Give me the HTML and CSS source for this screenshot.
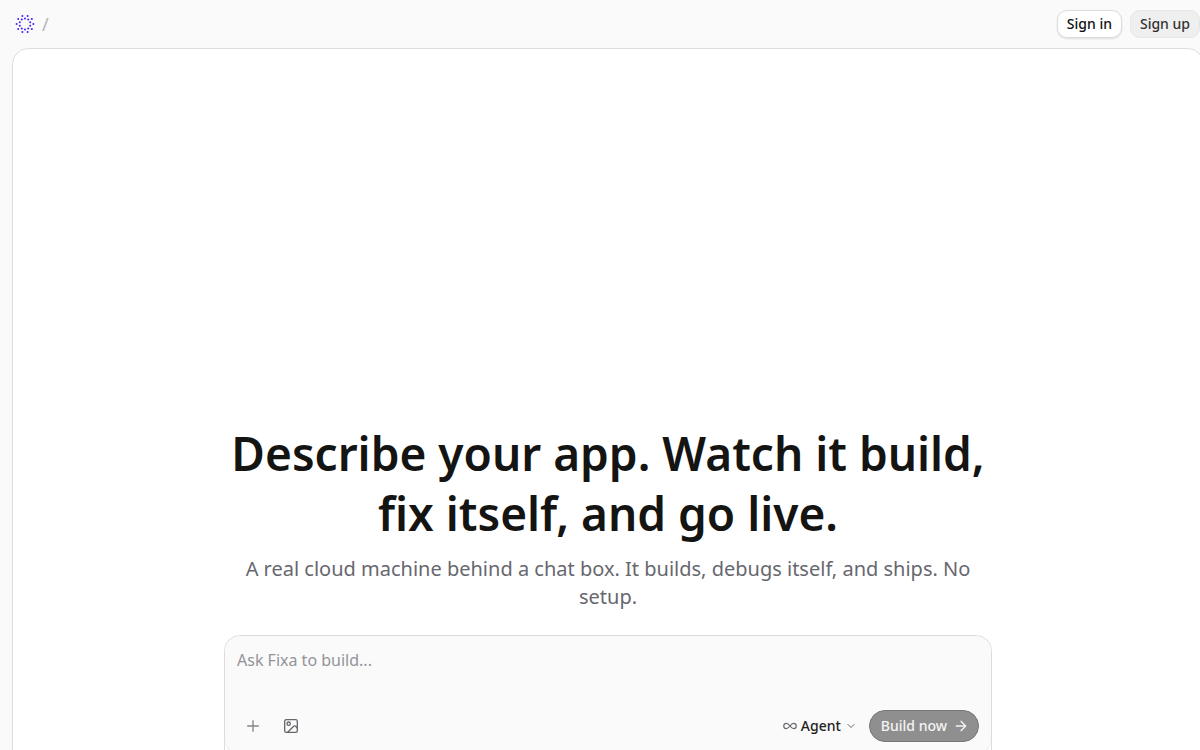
FILE: index.html
```html
<!DOCTYPE html>
<html lang="en">
<head>
  <meta charset="UTF-8">
  <meta name="viewport" content="width=device-width, initial-scale=1.0">
  <title>Fixa</title>
  <link rel="stylesheet" href="styles.css">
</head>
<body>
  <header class="topbar">
    <nav class="brand">
      <a class="logo" href="/" aria-label="Fixa home">
        <svg width="20" height="20" viewBox="-10 -10 20 20" fill="#4320f0">
          <circle cx="2.6" cy="-8" r="1"/><circle cx="6.8" cy="-4.9" r="1"/>
          <circle cx="8.4" cy="0" r="1"/><circle cx="6.8" cy="4.9" r="1"/>
          <circle cx="2.6" cy="8" r="1"/><circle cx="-2.6" cy="8" r="1"/>
          <circle cx="-6.8" cy="4.9" r="1"/><circle cx="-8.4" cy="0" r="1"/>
          <circle cx="-6.8" cy="-4.9" r="1"/><circle cx="-2.6" cy="-8" r="1"/>
          <circle cx="0" cy="-5.4" r="1"/><circle cx="3.2" cy="-4.4" r="1"/>
          <circle cx="5.2" cy="-1.7" r="1"/><circle cx="5.2" cy="1.7" r="1"/>
          <circle cx="3.2" cy="4.4" r="1"/><circle cx="0" cy="5.4" r="1"/>
          <circle cx="-3.2" cy="4.4" r="1"/><circle cx="-5.2" cy="1.7" r="1"/>
          <circle cx="-5.2" cy="-1.7" r="1"/><circle cx="-3.2" cy="-4.4" r="1"/>
        </svg>
      </a>
      <span class="slash">/</span>
    </nav>
    <div class="auth">
      <button class="btn btn-light" type="button">Sign in</button>
      <button class="btn btn-muted" type="button">Sign up</button>
    </div>
  </header>

  <main class="panel">
    <section class="hero">
      <h1>Describe your app. Watch it build, fix itself, and go live.</h1>
      <p class="subtitle">A real cloud machine behind a chat box. It builds, debugs itself, and ships. No setup.</p>

      <div class="composer-shell">
        <form class="composer">
          <textarea class="prompt" rows="2" aria-label="Prompt" placeholder="Ask Fixa to build..."></textarea>
          <div class="toolbar">
            <div class="tools">
              <button class="icon-btn add-btn" type="button" aria-label="Add">
                <svg width="16" height="16" viewBox="0 0 24 24"><path d="M4 12h16M12 4v16"/></svg>
              </button>
              <button class="icon-btn" type="button" aria-label="Attach image">
                <svg width="16" height="16" viewBox="0 0 24 24"><rect x="2.5" y="2.5" width="19" height="19" rx="2.5"/><circle cx="8.5" cy="8.5" r="2.5"/><path d="M7 21.5 16 12.5c1-1 2-1 3 0l2.500 2.500"/></svg>
              </button>
            </div>
            <div class="actions">
              <button class="mode-btn" type="button">
                <svg width="14" height="14" viewBox="0 0 24 24"><path d="M12 12c-2-2.7-4-4.500-6.200-4.500a4.500 4.500 0 0 0 0 9C8 16.500 10 14.700 12 12c2-2.700 4-4.500 6.200-4.500a4.500 4.500 0 0 1 0 9C16 16.500 14 14.700 12 12z"/></svg>
                <span>Agent</span>
                <svg width="12" height="12" viewBox="0 0 24 24"><path d="m6 9 6 6 6-6"/></svg>
              </button>
              <button class="build-btn" type="submit">
                <span>Build now</span>
                <svg width="16" height="16" viewBox="0 0 24 24"><path d="M5 12h14M12 5l7 7-7 7"/></svg>
              </button>
            </div>
          </div>
        </form>
      </div>
    </section>
  </main>
</body>
</html>
```

FILE: styles.css
```css
* {
  box-sizing: border-box;
}

body {
  margin: 0;
  height: 100vh;
  overflow: hidden;
  background-color: #fafafa;
  color: #141412;
  font-family: "Noto Sans", sans-serif;
  font-size: 14px;
}

button,
textarea {
  font: inherit;
}

button {
  cursor: pointer;
}

svg {
  display: block;
  flex-shrink: 0;
}

.topbar {
  display: flex;
  align-items: center;
  justify-content: space-between;
  height: 48px;
  padding-left: 15px;
}

.brand {
  display: flex;
  align-items: center;
  gap: 7px;
}

.slash {
  color: #b4b4b4;
  font-size: 18px;
}

.auth {
  display: flex;
  gap: 8px;
}

.btn {
  height: 28px;
  padding: 0 9px;
  border: 1px solid #dcdcdc;
  border-radius: 10px;
  font-weight: 500;
  line-height: 20px;
}

.btn-light {
  background-color: #fff;
  color: #111;
  box-shadow: 0 1px 2px rgba(0, 0, 0, 0.12);
}

.btn-muted {
  background-color: #efefef;
  border-color: #e6e6e6;
  color: #333;
}

/* The panel runs a little past the right edge of the window */
.panel {
  min-height: 100vh;
  margin-right: -4px;
  margin-left: 12px;
  padding-top: calc(50vh - 1px);
  background-color: #fff;
  border: 1px solid #dedede;
  border-radius: 16px;
}

.hero {
  max-width: 768px;
  margin: 0 auto;
  text-align: center;
}

h1 {
  margin: 0;
  font-size: 46px;
  font-weight: 600;
  line-height: 60px;
}

.subtitle {
  margin: 12px 0 24px;
  color: #67676e;
  font-size: 20px;
  line-height: 28px;
}

.composer-shell {
  padding-bottom: 40px;
  background-color: #fff;
  border: 1px solid #dcdcdc;
  border-radius: 16px;
}

.composer {
  padding: 12px;
  background-color: #fafafa;
  border-bottom: 1px solid #dcdcdc;
  border-radius: 16px;
}

.prompt {
  display: block;
  width: 100%;
  height: 62px;
  padding: 0;
  border: 0;
  outline: 0;
  background: none;
  color: #141412;
  font-size: 16px;
  line-height: 24px;
  resize: none;
}

.prompt::placeholder {
  color: #939398;
}

.toolbar,
.tools,
.actions {
  display: flex;
  align-items: center;
}

.toolbar {
  justify-content: space-between;
}

.tools {
  gap: 6px;
}

.actions {
  gap: 12px;
}

.icon-btn,
.mode-btn,
.build-btn {
  display: flex;
  align-items: center;
  justify-content: center;
  height: 32px;
  border: 0;
  background: none;
  line-height: 20px;
}

.icon-btn svg,
.mode-btn svg,
.build-btn svg {
  fill: none;
  stroke: currentColor;
  stroke-width: 2;
  stroke-linecap: round;
  stroke-linejoin: round;
}

.icon-btn {
  width: 32px;
  padding: 0;
  color: #67676e;
}

.add-btn {
  color: #85858a;
}

.mode-btn {
  gap: 4px;
  padding: 0;
  color: #222;
  font-weight: 500;
}

.mode-btn svg {
  color: #67676e;
}

.build-btn {
  gap: 6px;
  padding: 0 9px 0 11px;
  background-color: #8f8f8f;
  border: 1px solid #777;
  border-radius: 16px;
  color: #f4f4f4;
  font-weight: 500;
}
```
